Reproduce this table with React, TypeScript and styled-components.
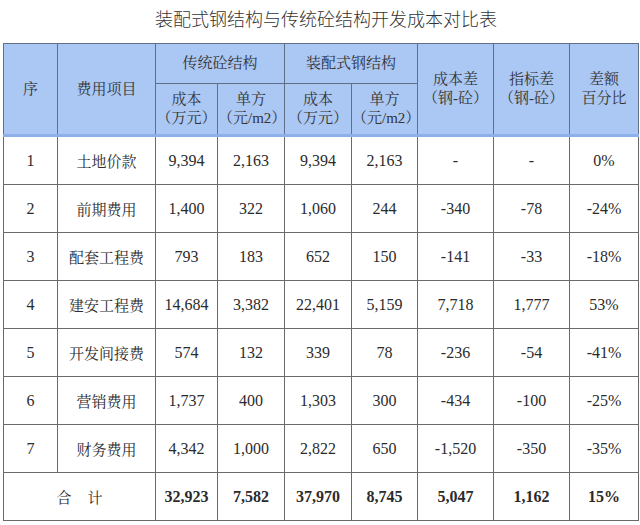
import React from 'react';
import styled, { createGlobalStyle } from 'styled-components';

const GlobalStyle = createGlobalStyle`
  html, body {
    margin: 0;
    padding: 0;
    background: #fff;
  }
  body {
    font-family: "Liberation Serif", "Noto Serif CJK SC", "Noto Sans CJK SC", serif;
    color: #2b2b2b;
  }
`;

const Page = styled.div`
  width: 640px;
  height: 525px;
  overflow: hidden;
`;

const Title = styled.div`
  height: 43px;
  padding-top: 6px;
  box-sizing: border-box;
  font-family: "Noto Sans CJK SC", sans-serif;
  font-size: 18px;
  font-weight: 300;
  line-height: 24px;
  text-align: center;
  color: #333;
  padding-left: 12px;
`;

const Table = styled.table`
  margin-left: 3px;
  width: 635px;
  border-collapse: collapse;
  table-layout: fixed;
  font-size: 15px;
`;

const HeadCell = styled.th<{ $h?: number; $last?: boolean }>`
  height: ${(p) => p.$h ?? 39}px;
  padding: 0;
  background: #abc7f3;
  border: 1px solid #5f6f86;
  border-bottom: ${(p) => (p.$last ? '3px solid #8eb0e8' : '1px solid #5f6f86')};
  font-weight: normal;
  line-height: 19px;
  text-align: center;
  vertical-align: middle;
  color: #333;
`;

const Cell = styled.td<{ $bold?: boolean }>`
  height: 47px;
  padding: 0;
  border: 1px solid #6a6a6a;
  text-align: center;
  vertical-align: middle;
  font-size: 16px;
  font-weight: ${(p) => (p.$bold ? 'bold' : 'normal')};
  color: #2b2b2b;
`;

const NameCell = styled(Cell)`
  font-size: 15px;
`;

const TotalLabel = styled.span`
  font-size: 15px;
  letter-spacing: 16px;
  margin-right: -16px;
`;

const rows: string[][] = [
  ['1', '土地价款', '9,394', '2,163', '9,394', '2,163', '-', '-', '0%'],
  ['2', '前期费用', '1,400', '322', '1,060', '244', '-340', '-78', '-24%'],
  ['3', '配套工程费', '793', '183', '652', '150', '-141', '-33', '-18%'],
  ['4', '建安工程费', '14,684', '3,382', '22,401', '5,159', '7,718', '1,777', '53%'],
  ['5', '开发间接费', '574', '132', '339', '78', '-236', '-54', '-41%'],
  ['6', '营销费用', '1,737', '400', '1,303', '300', '-434', '-100', '-25%'],
  ['7', '财务费用', '4,342', '1,000', '2,822', '650', '-1,520', '-350', '-35%'],
];

const total = ['32,923', '7,582', '37,970', '8,745', '5,047', '1,162', '15%'];

const widths = [54, 98, 62, 67, 67, 66, 76, 76, 69];

export default function App() {
  return (
    <Page>
      <GlobalStyle />
      <Title>装配式钢结构与传统砼结构开发成本对比表</Title>
      <Table>
        <colgroup>
          {widths.map((w, i) => (
            <col key={i} style={{ width: w }} />
          ))}
        </colgroup>
        <thead>
          <tr>
            <HeadCell rowSpan={2} $last>序</HeadCell>
            <HeadCell rowSpan={2} $last>费用项目</HeadCell>
            <HeadCell colSpan={2}>传统砼结构</HeadCell>
            <HeadCell colSpan={2}>装配式钢结构</HeadCell>
            <HeadCell rowSpan={2} $last>
              成本差
              <br />
              （钢-砼）
            </HeadCell>
            <HeadCell rowSpan={2} $last>
              指标差
              <br />
              （钢-砼）
            </HeadCell>
            <HeadCell rowSpan={2} $last>
              差额
              <br />
              百分比
            </HeadCell>
          </tr>
          <tr>
            <HeadCell $h={50} $last>
              成本
              <br />
              （万元）
            </HeadCell>
            <HeadCell $h={50} $last>
              单方
              <br />
              （元/m2）
            </HeadCell>
            <HeadCell $h={50} $last>
              成本
              <br />
              （万元）
            </HeadCell>
            <HeadCell $h={50} $last>
              单方
              <br />
              （元/m2）
            </HeadCell>
          </tr>
        </thead>
        <tbody>
          {rows.map((r) => (
            <tr key={r[0]}>
              {r.map((v, i) =>
                i === 1 ? <NameCell key={i}>{v}</NameCell> : <Cell key={i}>{v}</Cell>
              )}
            </tr>
          ))}
          <tr>
            <Cell colSpan={2}>
              <TotalLabel>合计</TotalLabel>
            </Cell>
            {total.map((v, i) => (
              <Cell key={i} $bold>
                {v}
              </Cell>
            ))}
          </tr>
        </tbody>
      </Table>
    </Page>
  );
}
